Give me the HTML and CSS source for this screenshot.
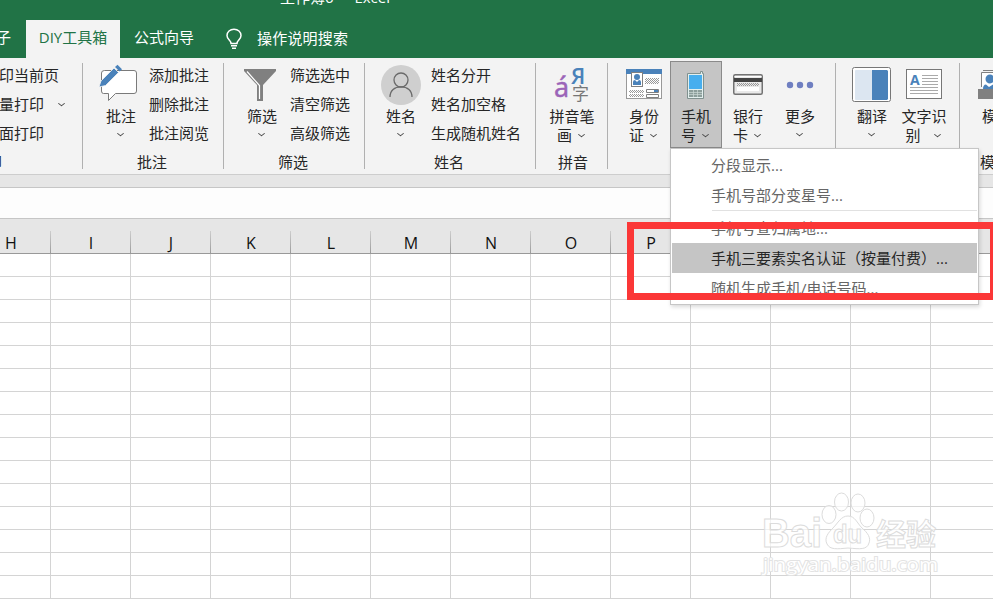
FILE: index.html
```html
<!DOCTYPE html>
<html lang="zh-CN">
<head>
    <meta charset="UTF-8">
    <title>工作簿6 - Excel</title>
    <link rel="stylesheet" href="styles.css">
</head>
<body>

<header class="titlebar">
    <div class="window-title"><span>工作簿6</span><span>-</span><span>Excel</span></div>
    <nav class="tabs">
        <div class="tab tab-cut"><span>子</span></div>
        <div class="tab active">DIY工具箱</div>
        <div class="tab tab-wizard">公式向导</div>
        <div class="search">
            <svg width="18" height="22" viewBox="0 0 18 22" fill="none" stroke="#fff" stroke-width="1.5">
                <path d="M6 15.500C6 12.500 2 11.500 2 7.500C2 3.800 5 1.200 9 1.200S16 3.800 16 7.500C16 11.500 12 12.500 12 15.500Z"/>
                <path d="M6 17.800H12M7 20.200H11"/>
            </svg>
            <span>操作说明搜索</span>
        </div>
    </nav>
</header>

<section class="ribbon">
    <div class="group group-print">
        <div class="group-body">
            <ul class="commands">
                <li>印当前页</li>
                <li>量打印 <i class="arrow"></i></li>
                <li>面打印</li>
            </ul>
        </div>
        <div class="group-name">打印</div>
    </div>

    <div class="group group-note">
        <div class="group-body">
            <div class="big-button">
                <svg class="icon" width="44" height="40" viewBox="0 0 44 40">
                    <path d="M9.500 8.500H39Q41.500 8.500 41.500 11V29Q41.500 31.500 39 31.500H20.500L13.500 38.500V31.500H8.500Q6.500 31.500 6.500 29V11Q6.500 8.500 9.500 8.500Z" fill="#fff" stroke="#7a7a7a"/>
                    <path d="M4 25L6 19L19 6L23.500 10.500L10.500 23.500Z" fill="#4a82ba" stroke="#f3f3f3" stroke-width=".8"/>
                    <path d="M20 5L22.500 2.800L27 7.200L24.700 9.600Z" fill="#4a82ba"/>
                </svg>
                <span>批注</span>
                <i class="arrow"></i>
            </div>
            <ul class="commands">
                <li>添加批注</li>
                <li>删除批注</li>
                <li>批注阅览</li>
            </ul>
        </div>
        <div class="group-name">批注</div>
    </div>

    <div class="group group-filter">
        <div class="group-body">
            <div class="big-button">
                <svg class="icon" width="40" height="40" viewBox="0 0 40 40">
                    <path d="M2 7H34V9L21 23V39H15V23L2 9Z" fill="#808080"/>
                    <path d="M5 9.500L17.500 23.500V37" fill="none" stroke="#fff" stroke-width="1.200"/>
                </svg>
                <span>筛选</span>
                <i class="arrow"></i>
            </div>
            <ul class="commands">
                <li>筛选选中</li>
                <li>清空筛选</li>
                <li>高级筛选</li>
            </ul>
        </div>
        <div class="group-name">筛选</div>
    </div>

    <div class="group group-person">
        <div class="group-body">
            <div class="big-button">
                <svg class="icon" width="40" height="40" viewBox="0 0 40 40">
                    <circle cx="20" cy="20" r="20" fill="#cfcfcf"/>
                    <g transform="translate(0 -1)" fill="none" stroke="#6a6a6a" stroke-width="1.300">
                        <circle cx="20" cy="16" r="7"/>
                        <path d="M9 33C9 26.500 13.500 22.800 20 22.800S31 26.500 31 33"/>
                    </g>
                </svg>
                <span>姓名</span>
                <i class="arrow"></i>
            </div>
            <ul class="commands">
                <li>姓名分开</li>
                <li>姓名加空格</li>
                <li>生成随机姓名</li>
            </ul>
        </div>
        <div class="group-name">姓名</div>
    </div>

    <div class="group group-pinyin">
        <div class="group-body">
            <div class="big-button">
                <svg class="icon" width="40" height="40" viewBox="0 0 40 40">
                    <text class="glyph glyph-a" x="3" y="35">á</text>
                    <text class="glyph glyph-ya" x="20" y="22">Я</text>
                    <text class="glyph glyph-zi" x="21" y="37.500">字</text>
                </svg>
                <span>拼音笔</span>
                <span class="line">画 <i class="arrow"></i></span>
            </div>
        </div>
        <div class="group-name">拼音</div>
    </div>

    <div class="group group-card">
        <div class="group-body">
            <div class="big-button">
                <svg class="icon" width="40" height="40" viewBox="0 0 40 40">
                    <defs>
                        <pattern id="dots" width="2" height="2" patternUnits="userSpaceOnUse">
                            <rect width="1" height="1" fill="#999"/>
                            <rect x="1" y="1" width="1" height="1" fill="#999"/>
                        </pattern>
                    </defs>
                    <rect x="2.500" y="7.500" width="35" height="29" fill="#fff" stroke="#999"/>
                    <rect x="2" y="7" width="36" height="5" fill="#4a82ba"/>
                    <rect x="7.500" y="10.500" width="11" height="14" fill="#fff" stroke="#808080"/>
                    <circle cx="13" cy="15" r="3" fill="#4a82ba"/>
                    <path d="M9 23V20Q9 18 11 18L13 20L15 18Q17 18 17 20V23Z" fill="#4a82ba"/>
                    <path d="M21 16H35V22H21ZM5 28H20V31H5ZM5 32H20V35H5Z" fill="url(#dots)"/>
                    <path d="M22.500 27.500H34.500V30.500H22.500ZM22.500 32.500H34.500V35.500H22.500Z" fill="#fff" stroke="#808080"/>
                    <rect x="30" y="28" width="4" height="2" fill="#4a82ba"/>
                </svg>
                <span>身份</span>
                <span class="line">证 <i class="arrow"></i></span>
            </div>
            <div class="big-button pressed">
                <svg class="icon" width="40" height="40" viewBox="0 0 40 40">
                    <path d="M11.500 11.500H24.500V9.500H26.500V11.500H27.500V36.500H11.500Z" fill="#e3efee" stroke="#80918f"/>
                    <rect x="13" y="13" width="13" height="14" fill="#47aeee"/>
                    <path d="M13 28H26V35H13Z" fill="#8c9e9b"/>
                    <path d="M17.500 28V35M21.500 28V35M13 30.500H26M13 32.500H26" stroke="#cbd8d6" stroke-width=".7"/>
                </svg>
                <span>手机</span>
                <span class="line">号 <i class="arrow"></i></span>
            </div>
            <div class="big-button">
                <svg class="icon" width="40" height="40" viewBox="0 0 40 40">
                    <rect x="5.750" y="12.750" width="28.500" height="19.500" rx="1.500" fill="#e9e9e9" stroke="#737373" stroke-width="1.500"/>
                    <path d="M6.500 14.500H33.500" stroke="#fff"/>
                    <rect x="6" y="16" width="28" height="4" fill="#444"/>
                    <path d="M9 21H31V24H9Z" fill="url(#dots)"/>
                    <rect x="9" y="25" width="22" height="4" fill="#fff"/>
                </svg>
                <span>银行</span>
                <span class="line">卡 <i class="arrow"></i></span>
            </div>
            <div class="big-button">
                <svg class="icon" width="40" height="40" viewBox="0 0 40 40" fill="#6f7fc1">
                    <circle cx="10" cy="23" r="3.200"/>
                    <circle cx="20" cy="23" r="3.200"/>
                    <circle cx="30" cy="23" r="3.200"/>
                </svg>
                <span>更多</span>
                <i class="arrow"></i>
            </div>
        </div>
    </div>

    <div class="group group-translate">
        <div class="group-body">
            <div class="big-button">
                <svg class="icon" width="40" height="40" viewBox="0 0 40 40">
                    <rect x=".500" y="5.500" width="38" height="34" rx="2" fill="#fff" stroke="#777"/>
                    <rect x="3" y="8" width="17" height="30" rx="1" fill="#dce6f1"/>
                    <path d="M20 8H35L36 9V37L35 38H20Z" fill="#4a82ba"/>
                </svg>
                <span>翻译</span>
                <i class="arrow"></i>
            </div>
            <div class="big-button">
                <svg class="icon" width="40" height="40" viewBox="0 0 40 40">
                    <rect x="2.500" y="7.500" width="35" height="29" fill="#fff" stroke="#777"/>
                    <text class="glyph glyph-latin" x="6" y="23">A</text>
                    <path d="M18 13.500H34M18 16.500H34M18 19.500H34M18 22.500H34M6 25.500H34M6 28.500H34M6 31.500H34" stroke="#aaa"/>
                </svg>
                <span>文字识</span>
                <span class="line wide">别 <i class="arrow"></i></span>
            </div>
        </div>
    </div>

    <div class="group group-template">
        <div class="group-body">
            <div class="big-button">
                <svg class="icon" width="40" height="40" viewBox="0 0 40 40">
                    <path d="M6 8.500H35M4.500 25V10.500H37V25" fill="#fff" stroke="#808080"/>
                    <circle cx="13" cy="17" r="4.500" fill="#4a82ba"/>
                    <path d="M6 27Q6 22.500 9 22.500L12 25L16 22.500L21 27Z" fill="#4a82ba"/>
                    <rect x="1" y="27" width="39" height="10" fill="#808080"/>
                </svg>
                <span>模板</span>
            </div>
        </div>
        <div class="group-name">模板</div>
    </div>
</section>

<div class="ribbon-gap"></div>
<div class="formula-bar"></div>

<main class="sheet">
    <div class="column-heads">
        <div>H</div>
        <div>I</div>
        <div>J</div>
        <div>K</div>
        <div>L</div>
        <div>M</div>
        <div>N</div>
        <div>O</div>
        <div>P</div>
        <div></div>
        <div></div>
        <div></div>
        <div></div>
    </div>
    <div class="cells"></div>
</main>

<div class="menu">
    <div class="menu-item">分段显示...</div>
    <div class="menu-item">手机号部分变星号...</div>
    <hr>
    <div class="menu-item">手机号查归属地...</div>
    <div class="menu-item selected">手机三要素实名认证（按量付费）...</div>
    <div class="menu-item">随机生成手机/电话号码...</div>
</div>

<div class="red-frame"></div>

<svg class="watermark" width="200" height="110" viewBox="0 0 200 110">
    <ellipse cx="79" cy="34.500" rx="7" ry="9"/>
    <ellipse cx="91.500" cy="22" rx="7" ry="9"/>
    <ellipse cx="108" cy="23" rx="7" ry="9"/>
    <ellipse cx="117" cy="38" rx="7" ry="9"/>
    <path d="M98 36C105 36 107 43 112 48C118 53 121 58 119 63C117 70 110 69 98 68C87 69 80 70 77 64C74 58 78 53 83 48C88 43 91 36 98 36Z"/>
    <text class="mark-bai" x="12" y="67" textLength="60" lengthAdjust="spacingAndGlyphs">Bai</text>
    <text class="mark-du" x="83" y="63" textLength="29" lengthAdjust="spacingAndGlyphs">du</text>
    <text class="mark-name" x="126" y="65">经验</text>
    <text class="mark-url" x="13" y="91" textLength="175" lengthAdjust="spacingAndGlyphs">jingyan.baidu.com</text>
</svg>

</body>
</html>
```
FILE: styles.css
```css
body {
    margin: 0;
    width: 993px;
    height: 599px;
    overflow: hidden;
    position: relative;
    background-color: #fff;
    color: #262626;
    font-family: "Open Sans", "Noto Sans CJK SC", sans-serif;
    font-size: 15px;
}
.titlebar {
    height: 58px;
    background-color: #217346;
    color: #fff;
    overflow: hidden;
}
.window-title {
    display: flex;
    gap: 8px;
    height: 20px;
    line-height: 20px;
    margin: -13px 0 13px 280px;
    font-size: 15px;
}
.tabs {
    display: flex;
    height: 38px;
    line-height: 35px;
}
.tab-cut {
    width: 26px;
    display: flex;
}
.tab-cut span {
    margin-left: -4px;
}
.tab.active {
    width: 94px;
    text-align: center;
    background-color: #f3f3f3;
    color: #217346;
}
.tab-wizard {
    width: 106px;
    text-indent: 14px;
}
.search {
    display: flex;
    gap: 14px;
}
.search svg {
    margin: 8px 0 0 -1px;
}
.search span {
    line-height: 37px;
    letter-spacing: 0.2px;
}
.ribbon {
    display: flex;
    height: 116px;
    background-color: #f3f3f3;
    border-bottom: 1px solid #cdcdcd;
    overflow: hidden;
    line-height: 19px;
}
.group {
    flex: none;
    box-sizing: border-box;
    height: 106px;
    margin-top: 5px;
    border-right: 1px solid #b0b0b0;
}
.group-body {
    display: flex;
    height: 90px;
    margin-top: -2px;
}
.group-name {
    height: 20px;
    line-height: 22px;
    text-align: center;
    white-space: nowrap;
}
.group-print {
    width: 83px;
}
.group-print .commands {
    margin-left: -1px;
}
.group-print .group-name {
    text-align: left;
    margin-left: -28px;
}
.group-note,
.group-filter {
    width: 141px;
}
.group-person {
    width: 171px;
}
.group-pinyin {
    width: 72px;
}
.group-card {
    width: 228px;
}
.group-translate {
    width: 124px;
}
.group-template {
    width: 60px;
    border-right: none;
}
.group-note .group-body,
.group-filter .group-body {
    padding-left: 12px;
}
.group-person .group-body,
.group-pinyin .group-body,
.group-card .group-body,
.group-translate .group-body {
    padding-left: 10px;
}
.group-template .group-body {
    padding-left: 11px;
}
.group-template .group-name {
    padding-left: 20px;
    text-align: left;
}
.group-filter .group-name,
.group-note .group-name,
.group-person .group-name {
    padding-right: 2px;
}
.group-pinyin .group-name {
    padding-left: 3px;
}
.commands {
    list-style: none;
    margin: 0;
    padding: 0;
    white-space: nowrap;
}
.commands li {
    display: flex;
    align-items: center;
    gap: 15px;
    height: 29px;
}
.group-note .commands,
.group-filter .commands {
    margin-left: 2px;
}
.group-person .commands {
    margin-left: 4px;
}
.big-button {
    flex: none;
    box-sizing: border-box;
    width: 52px;
    height: 87px;
    display: flex;
    flex-direction: column;
    align-items: center;
    white-space: nowrap;
}
.icon {
    flex: none;
    margin: 1px 0 5px;
}
.group-person .icon {
    margin: 4px 0 2px;
}
.group-pinyin .icon {
    margin-left: -2px;
}
.group-note .icon {
    margin-left: -9px;
}
.big-button.pressed {
    background-color: #c5c5c5;
    box-shadow: inset 0 0 0 1px #8a8a8a;
}
.arrow {
    width: 4px;
    height: 4px;
    margin-top: -2px;
    border-right: 1px solid #444;
    border-bottom: 1px solid #444;
    transform: scaleY(0.8) rotate(45deg);
}
.big-button > .arrow {
    margin-top: 5px;
    margin-right: 1px;
}
.line {
    display: flex;
    align-items: center;
    gap: 7px;
    margin-right: 3px;
}
.line.wide {
    gap: 14px;
}
.glyph {
    font-family: "Open Sans", sans-serif;
}
.glyph-a {
    font-family: "Noto Sans", sans-serif;
    font-size: 27px;
    stroke: #9b64b8;
    stroke-width: 0.4px;
    fill: #9b64b8;
}
.glyph-ya {
    font-size: 22px;
    font-weight: 600;
    fill: #4a82ba;
}
.glyph-zi {
    font-family: "Noto Sans CJK SC", sans-serif;
    font-size: 17px;
    fill: #777;
}
.glyph-latin {
    font-size: 14px;
    font-weight: bold;
    fill: #4a82ba;
}
.ribbon-gap {
    height: 12px;
    background-color: #e6e6e6;
    border-bottom: 1px solid #c6c6c6;
}
.formula-bar {
    height: 30px;
    background-color: #fdfdfd;
    border-bottom: 1px solid #c6c6c6;
}
.column-heads {
    display: flex;
    width: 1011px;
    height: 34px;
    background-color: #e6e6e6;
    border-bottom: 1px solid #999;
    color: #111;
    font-size: 16px;
    line-height: 24px;
}
.column-heads div {
    flex: none;
    box-sizing: border-box;
    width: 80px;
    height: 22px;
    margin-top: 12px;
    padding-left: 1px;
    text-align: center;
    border-right: 1px solid;
    border-image: linear-gradient(#d0d0d0, #999) 1;
}
.column-heads div:first-child {
    margin-left: -29px;
}
.cells {
    height: 345px;
    background-image:
        linear-gradient(to right, #d4d4d4 1px, transparent 1px),
        linear-gradient(to bottom, transparent 22px, #d4d4d4 22px);
    background-size: 80px 23px;
    background-position: 50px 0;
}
.menu {
    position: absolute;
    left: 670px;
    top: 148px;
    box-sizing: border-box;
    width: 309px;
    height: 157px;
    padding: 1px;
    background-color: #fff;
    border: 1px solid #c6c6c6;
    box-shadow: 1px 2px 4px rgba(0, 0, 0, 0.15);
    color: #666;
}
.menu-item {
    height: 30px;
    line-height: 30px;
    padding-left: 39px;
    white-space: nowrap;
}
.menu hr {
    height: 1px;
    margin: 0 0 2px 40px;
    border: none;
    background-color: #e1e1e1;
}
.menu-item.selected {
    background-color: #c5c5c5;
    color: #262626;
}
.red-frame {
    position: absolute;
    left: 627px;
    top: 222px;
    box-sizing: border-box;
    width: 370px;
    height: 78px;
    border: 7px solid #fb3737;
}
.watermark {
    position: absolute;
    left: 750px;
    top: 480px;
    fill: rgba(255, 255, 255, 0.7);
    stroke: #dcdcdc;
    font-family: "Liberation Sans", "Noto Sans CJK SC", sans-serif;
}
.mark-bai {
    font-size: 40px;
    font-weight: bold;
}
.mark-du {
    font-size: 26px;
    font-weight: bold;
}
.mark-name {
    font-size: 30px;
    font-weight: bold;
}
.mark-url {
    font-family: "Open Sans", sans-serif;
    font-size: 19px;
    stroke: #e3e3e3;
    stroke-width: 2px;
    paint-order: stroke;
    fill: #fff;
}
```
